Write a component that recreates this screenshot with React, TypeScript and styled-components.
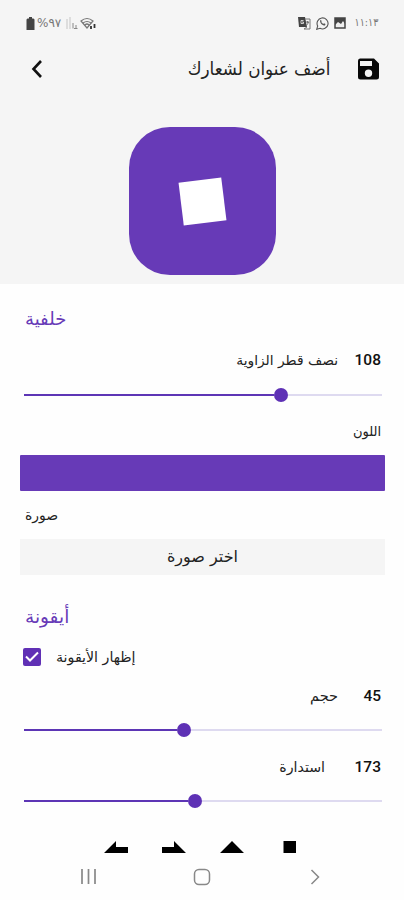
import React from "react";
import styled, { createGlobalStyle } from "styled-components";

const purple = "#673ab7";

const GlobalStyle = createGlobalStyle`
  * { box-sizing: border-box; }
  body { margin: 0; background: #fefefe; }
`;

const Screen = styled.main`
  display: flex;
  flex-direction: column;
  width: 404px;
  height: 900px;
  overflow: hidden;
  background: #fefefe;
  color: #111;
  font-family: Roboto, "DejaVu Sans", sans-serif;
`;

const Header = styled.header`
  height: 284px;
  flex: none;
  background: #f5f5f5;
`;

const StatusBar = styled.div`
  display: flex;
  justify-content: space-between;
  align-items: center;
  height: 46px;
  padding: 0 26px 0 26px;
  color: #666;
`;

const StatusGroup = styled.div<{ $gap: number }>`
  display: flex;
  align-items: center;
  gap: ${(p) => p.$gap}px;
`;

const Label = styled.span<{ $size: number; $scale?: number; $origin?: string; $color?: string }>`
  font-family: "DejaVu Sans", sans-serif;
  font-size: ${(p) => p.$size}px;
  line-height: 24px;
  white-space: nowrap;
  color: ${(p) => p.$color || "#222"};
  transform: scaleX(${(p) => p.$scale || 1});
  transform-origin: ${(p) => p.$origin || "right"} center;
`;

const StatusText = styled(Label)`
  unicode-bidi: bidi-override;
`;

const TitleBar = styled.div`
  display: flex;
  align-items: center;
  height: 46px;
  padding: 0 24px 0 25px;
`;

const Title = styled.h1`
  display: flex;
  justify-content: flex-end;
  flex: 1;
  margin: 0 26px 0 0;
  font-weight: 400;
`;

const Preview = styled.div`
  display: flex;
  align-items: center;
  justify-content: center;
  width: 147px;
  height: 148px;
  margin: 35px 0 0 129px;
  border-radius: 41px;
  background: ${purple};
`;

const PreviewShape = styled.div`
  width: 43px;
  height: 43px;
  background: #fff;
  transform: rotate(-7deg);
`;

const Content = styled.section`
  height: 569px;
  flex: none;
  overflow: hidden;
  padding: 0 19px 0 20px;
`;

const Heading = styled.h2<{ $top: number }>`
  display: flex;
  height: 24px;
  margin: ${(p) => p.$top}px 0 0 5px;
  font-weight: 400;
`;

const ValueRow = styled.div<{ $top: number }>`
  display: flex;
  justify-content: flex-end;
  align-items: center;
  height: 24px;
  margin: ${(p) => p.$top}px 4px 0 0;
`;

const Value = styled.span<{ $width: number }>`
  width: ${(p) => p.$width}px;
  text-align: right;
  font: 500 15.5px/24px Roboto, sans-serif;
  color: #111;
`;

const SliderRoot = styled.div<{ $top: number }>`
  display: flex;
  align-items: center;
  height: 14px;
  margin: ${(p) => p.$top}px 3px 0 4px;
`;

const Filled = styled.div<{ $width: number }>`
  width: ${(p) => p.$width}px;
  height: 2px;
  background: #5d35b5;
`;

const Thumb = styled.div`
  width: 14px;
  height: 14px;
  border-radius: 50%;
  background: #5e31b5;
`;

const Remaining = styled.div`
  flex: 1;
  height: 2px;
  background: #dedaf0;
`;

const Swatch = styled.div`
  height: 36px;
  margin-top: 12px;
  border-radius: 1px;
  background: ${purple};
`;

const PickButton = styled.button`
  display: flex;
  align-items: center;
  justify-content: center;
  width: 100%;
  height: 36px;
  margin-top: 12px;
  padding: 0;
  border: 0;
  background: #f5f5f5;
`;

const LabelRow = styled.div<{ $top: number; $end?: boolean }>`
  display: flex;
  justify-content: ${(p) => (p.$end ? "flex-end" : "flex-start")};
  height: 24px;
  margin: ${(p) => p.$top}px 4px 0 5px;
`;

const CheckRow = styled.label`
  display: flex;
  align-items: center;
  gap: 15px;
  height: 24px;
  margin: 16px 0 0 3px;
`;

const IconRow = styled.div`
  display: flex;
  gap: 34px;
  margin: 33px 0 0 84px;
`;

const NavBar = styled.nav`
  display: flex;
  align-items: center;
  justify-content: space-between;
  height: 47px;
  padding: 0 84px 0 80px;
`;

const HomeIcon = styled.svg`
  display: block;
  flex: none;
  margin-right: 3px;
`;

const Icon = styled.svg`
  display: block;
  flex: none;
`;

function Slider({ top, filled }: { top: number; filled: number }) {
  return (
    <SliderRoot $top={top}>
      <Filled $width={filled} />
      <Thumb />
      <Remaining />
    </SliderRoot>
  );
}

const arrows = [
  "M0 12 12 0V6H24V18H12V24Z",
  "M24 12 12 0V6H0V18H12V24Z",
  "M12 0 24 12H18V24H6V12H0Z",
  "M5.500 0H18V12H24L12 24 0 12H5.500Z",
];

export default function App() {
  return (
    <Screen>
      <GlobalStyle />
      <Header>
        <StatusBar>
          <StatusGroup $gap={2}>
            <Icon width="9" height="13" viewBox="0 0 9 13">
              <path d="M3 0h3v1.500h1.500l1 1V13H.5V2.500l1-1H3Z" fill="#444" />
            </Icon>
            <StatusText $size={12} $color="#777" $origin="left" dir="ltr">%٩٧</StatusText>
            <Icon width="15" height="12" viewBox="0 0 15 12">
              <path d="M3 2h2v10H3zM6 0h2v12H6z" fill="#ddd" />
              <path d="M10 6v5.500M11 11.500h3.500M13 8v3" stroke="#888" fill="none" />
            </Icon>
            <Icon width="16" height="13" viewBox="0 0 16 13">
              <path d="M1 4Q7-1 13 4L7 11ZM3 6q4-3 8 0M5 8q2-2 4 0" fill="none" stroke="#777" strokeWidth="1.200" />
              <path d="M11 9v3M14.500 7v4" stroke="#333" strokeWidth="1.800" />
            </Icon>
          </StatusGroup>
          <StatusGroup $gap={5}>
            <Icon width="13" height="13" viewBox="0 0 13 13">
              <path d="M0 0h7l2 10H1Z" fill="#444" />
              <path d="M7 2h5v10H6l3-2M8 5h3M9.500 4v2M8 9l3-4" fill="none" stroke="#777" />
              <path d="M5.500 3.500H3v3h2.500V5H4" fill="none" stroke="#eee" strokeWidth=".8" />
            </Icon>
            <Icon width="13" height="13" viewBox="0 0 13 13">
              <path d="m.7 12.300 1-3.300a5.500 5.500 0 1 1 2.300 2.300Z" fill="none" stroke="#555" strokeWidth="1.100" />
              <path d="M4 3.500c0 3 2.500 5 5 5l.5-1.500-1.500-.7-.8.7-2-2 .5-.8-.7-1.200Z" fill="#555" />
            </Icon>
            <Icon width="12" height="12" viewBox="0 0 12 12">
              <path d="M1 1h10v10H1Z" fill="#eee" stroke="#444" strokeWidth="1.500" />
              <path d="M1 1h10v6L9 4 7 7 4 5 1 8Z" fill="#444" />
            </Icon>
            <StatusText $size={11} $scale={0.87} $color="#777" dir="ltr">١١:١٣</StatusText>
          </StatusGroup>
        </StatusBar>
        <TitleBar>
          <Icon width="24" height="24" viewBox="0 0 24 24">
            <path d="M16 4 8.500 12l7.500 8" fill="none" stroke="#111" strokeWidth="2.600" />
          </Icon>
          <Title><Label $size={18} $scale={0.93} dir="rtl">أضف عنوان لشعارك</Label></Title>
          <Icon width="24" height="24" viewBox="0 0 24 24">
            <path fillRule="evenodd" d="M4 1.500h14L23 6.500V20a2.500 2.500 0 0 1-2.500 2.500h-16A2.500 2.500 0 0 1 2 20V4a2.500 2.500 0 0 1 2-2.500ZM4 4v5h12V4Zm8.500 8.500a3.700 3.700 0 1 0 0 7.400 3.700 3.700 0 0 0 0-7.400Z" fill="#080808" />
          </Icon>
        </TitleBar>
        <Preview><PreviewShape /></Preview>
      </Header>
      <Content>
        <Heading $top={23}><Label $size={18} $color={purple} $origin="left" dir="rtl">خلفية</Label></Heading>
        <ValueRow $top={17}>
          <Label $size={13.8} dir="rtl">نصف قطر الزاوية</Label>
          <Value $width={43}>108</Value>
        </ValueRow>
        <Slider top={16} filled={250} />
        <LabelRow $top={17} $end><Label $size={13.5} $scale={0.97} dir="rtl">اللون</Label></LabelRow>
        <Swatch />
        <LabelRow $top={12}><Label $size={14} $origin="left" dir="rtl">صورة</Label></LabelRow>
        <PickButton><Label $size={16} $origin="center" dir="rtl">اختر صورة</Label></PickButton>
        <Heading $top={30}><Label $size={18.5} $color={purple} $origin="left" dir="rtl">أيقونة</Label></Heading>
        <CheckRow>
          <Icon width="18" height="18" viewBox="0 0 18 18">
            <rect width="18" height="18" rx="2" fill="#6030b5" />
            <path d="m3 8.500 4 4 8-8" fill="none" stroke="#fff" strokeWidth="2" />
          </Icon>
          <Label $size={14.2} $origin="left" dir="rtl">إظهار الأيقونة</Label>
        </CheckRow>
        <ValueRow $top={15}>
          <Label $size={14.5} dir="rtl">حجم</Label>
          <Value $width={43}>45</Value>
        </ValueRow>
        <Slider top={15} filled={153} />
        <ValueRow $top={18}>
          <Label $size={14.2} dir="rtl">استدارة</Label>
          <Value $width={56}>173</Value>
        </ValueRow>
        <Slider top={15} filled={164} />
        <IconRow>
          {arrows.map((d) => (
            <Icon key={d} width="24" height="24" viewBox="0 0 24 24"><path d={d} /></Icon>
          ))}
        </IconRow>
      </Content>
      <NavBar>
        <Icon width="17" height="17" viewBox="0 0 17 17">
          <path d="M2 1v15M8.500 1v15M15 1v15" stroke="#888" strokeWidth="1.700" />
        </Icon>
        <HomeIcon width="18" height="18" viewBox="0 0 18 18">
          <rect x="1.500" y="1.500" width="15" height="15" rx="4.500" fill="none" stroke="#888" strokeWidth="1.500" />
        </HomeIcon>
        <Icon width="10" height="16" viewBox="0 0 10 16">
          <path d="m1.500 1 7 7-7 7" fill="none" stroke="#888" strokeWidth="1.500" />
        </Icon>
      </NavBar>
    </Screen>
  );
}
